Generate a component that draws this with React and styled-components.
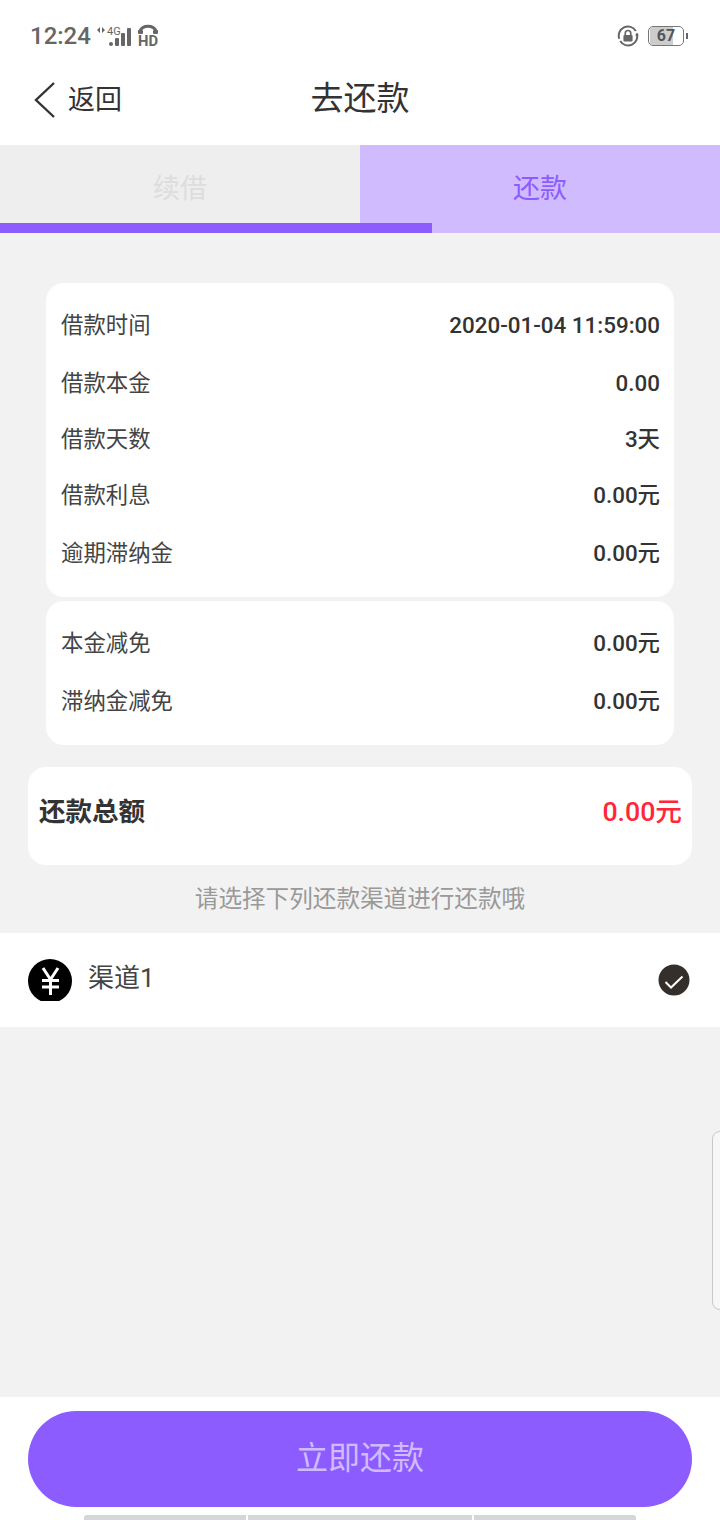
import React from 'react';
import styled, { createGlobalStyle } from 'styled-components';

const GlobalStyle = createGlobalStyle`
  html, body {
    margin: 0;
    padding: 0;
    background: #f2f2f2;
  }
  * {
    box-sizing: border-box;
  }
`;

const basicRows = [
  { label: '借款时间', value: '2020-01-04 11:59:00' },
  { label: '借款本金', value: '0.00' },
  { label: '借款天数', value: '3天', short: true },
  { label: '借款利息', value: '0.00元' },
  { label: '逾期滞纳金', value: '0.00元' },
];

const reliefRows = [
  { label: '本金减免', value: '0.00元' },
  { label: '滞纳金减免', value: '0.00元' },
];

function SignalIcon() {
  return (
    <svg width="36" height="24" viewBox="0 0 36 24">
      <path d="M1 6 L4 3 V9 Z M6 3 L9 6 L6 9 Z" fill="#666" />
      <text x="11" y="11" fontSize="11" fontFamily="Roboto, sans-serif" fill="#666">4G</text>
      <circle cx="15" cy="20" r="2" fill="#666" />
      <rect x="19" y="14" width="4" height="8" rx="1" fill="#666" />
      <rect x="25" y="9" width="4" height="13" rx="1" fill="#666" />
      <rect x="31" y="4" width="4" height="18" rx="1" fill="#666" />
    </svg>
  );
}

function CallIcon() {
  return (
    <svg width="22" height="26" viewBox="0 0 22 26">
      <path d="M3 8 C5.5 1.5 16.5 1.5 19 8" fill="none" stroke="#666" strokeWidth="3" />
      <rect x="1" y="7" width="5" height="4" rx="1" fill="#666" />
      <rect x="16" y="7" width="5" height="4" rx="1" fill="#666" />
      <text
        x="1"
        y="23"
        fontSize="15"
        fontWeight="700"
        fontFamily="Roboto, sans-serif"
        fill="#666"
        textLength="20"
        lengthAdjust="spacingAndGlyphs"
      >
        HD
      </text>
    </svg>
  );
}

function LockRotateIcon() {
  return (
    <svg width="22" height="22" viewBox="0 0 24 24">
      <path d="M20.5 6.5 A10 10 0 0 0 2.5 15" fill="none" stroke="#666" strokeWidth="2.2" />
      <path d="M3.5 17.5 A10 10 0 0 0 21.5 9" fill="none" stroke="#666" strokeWidth="2.2" />
      <path d="M22.5 13 L19.5 11 L23.5 10 Z" fill="#666" />
      <rect x="7" y="11" width="10" height="7" rx="1" fill="#666" />
      <path d="M9 11 V9 A3 3 0 0 1 15 9 V11" fill="none" stroke="#666" strokeWidth="1.8" />
    </svg>
  );
}

function YenIcon() {
  return (
    <svg width="44" height="42" viewBox="0 0 44 42">
      <circle cx="22" cy="22" r="22" fill="#000" />
      <path
        d="M15 9 L22.5 20.5 L30 9 M14 21.5 H31 M14 28 H31 M22.5 20 V36"
        fill="none"
        stroke="#fff"
        strokeWidth="3"
      />
    </svg>
  );
}

function CheckIcon() {
  return (
    <svg width="32" height="32" viewBox="0 0 32 32">
      <circle cx="16" cy="16" r="15.5" fill="#352f2b" />
      <path d="M7.5 18 L13 23.5 L24.5 12.5" fill="none" stroke="#fff" strokeWidth="2" />
    </svg>
  );
}

function BackIcon() {
  return (
    <svg width="22" height="38" viewBox="0 0 22 38">
      <path d="M20 2 L2 19 L20 36" fill="none" stroke="#333" strokeWidth="2.4" />
    </svg>
  );
}

function App() {
  return (
    <Page>
      <GlobalStyle />
      <TopArea>
        <StatusBar>
          <LeftStatus>
            <Time>12:24</Time>
            <SignalIcon />
            <CallIcon />
          </LeftStatus>
          <RightStatus>
            <LockRotateIcon />
            <Battery>
              <BatteryFill />
              <BatteryText>67</BatteryText>
            </Battery>
            <BatteryTip />
          </RightStatus>
        </StatusBar>
        <Header>
          <BackButton>
            <BackIcon />
            <BackText>返回</BackText>
          </BackButton>
          <Title>去还款</Title>
        </Header>
      </TopArea>

      <Tabs>
        <Tab>续借</Tab>
        <Tab $active>还款</Tab>
        <TabIndicator />
      </Tabs>

      <Content>
        <Card>
          {basicRows.map(row => (
            <Row key={row.label} $short={row.short}>
              <RowLabel>{row.label}</RowLabel>
              <RowValue>{row.value}</RowValue>
            </Row>
          ))}
        </Card>
        <ReliefCard>
          {reliefRows.map(row => (
            <Row key={row.label}>
              <RowLabel>{row.label}</RowLabel>
              <RowValue>{row.value}</RowValue>
            </Row>
          ))}
        </ReliefCard>
        <TotalCard>
          <TotalLabel>还款总额</TotalLabel>
          <TotalValue>0.00元</TotalValue>
        </TotalCard>
        <Hint>请选择下列还款渠道进行还款哦</Hint>
      </Content>

      <Channel>
        <ChannelLeft>
          <YenIcon />
          <ChannelName>渠道1</ChannelName>
        </ChannelLeft>
        <CheckIcon />
      </Channel>

      <Spacer />

      <Footer>
        <PayButton>立即还款</PayButton>
        <HomeBars>
          <HomeBar $width={162} />
          <HomeBar $width={224} />
          <HomeBar $width={162} />
        </HomeBars>
      </Footer>

      <SideHandle />
    </Page>
  );
}

const fontStack = `Roboto, "Noto Sans CJK SC", sans-serif`;

const Page = styled.div`
  position: relative;
  display: flex;
  flex-direction: column;
  width: 720px;
  height: 1520px;
  overflow: hidden;
  background: #f2f2f2;
  font-family: ${fontStack};
  color: #333;
`;

const TopArea = styled.div`
  height: 145px;
  background: #fff;
`;

const StatusBar = styled.div`
  display: flex;
  justify-content: space-between;
  align-items: center;
  height: 72px;
  padding: 0 32px 0 30px;
`;

const LeftStatus = styled.div`
  display: flex;
  align-items: center;
  gap: 5px;
`;

const RightStatus = styled.div`
  display: flex;
  align-items: center;
  gap: 2px;
`;

const Time = styled.span`
  width: 61px;
  font-size: 24px;
  font-weight: 500;
  color: #666;
`;

const Battery = styled.div`
  position: relative;
  width: 36px;
  height: 20px;
  margin-left: 7px;
  border: 1.5px solid #777;
  border-radius: 5px;
  overflow: hidden;
`;

const BatteryFill = styled.div`
  width: 67%;
  height: 100%;
  margin-left: 1px;
  background: #ccc;
`;

const BatteryText = styled.span`
  position: absolute;
  top: 0;
  left: 0;
  width: 100%;
  font-size: 16px;
  font-weight: 700;
  line-height: 17px;
  text-align: center;
  color: #555;
`;

const BatteryTip = styled.div`
  width: 2px;
  height: 6px;
  background: #666;
`;

const Header = styled.div`
  position: relative;
  display: flex;
  justify-content: center;
  align-items: center;
  height: 54px;
`;

const BackButton = styled.div`
  position: absolute;
  left: 34px;
  top: 9px;
  display: flex;
  align-items: center;
  gap: 12px;
`;

const BackText = styled.span`
  font-size: 27px;
  line-height: 38px;
  color: #333;
`;

const Title = styled.h1`
  margin: 0;
  font-size: 33px;
  font-weight: 400;
  line-height: 54px;
  color: #333;
`;

const Tabs = styled.div`
  position: relative;
  display: flex;
  height: 88px;
`;

const Tab = styled.div`
  flex: 1;
  padding-bottom: 6px;
  display: flex;
  justify-content: center;
  align-items: center;
  font-size: 27px;
  background: ${props => (props.$active ? '#d0bbff' : '#eeeeee')};
  color: ${props => (props.$active ? '#8c5cff' : '#dddddd')};
`;

const TabIndicator = styled.div`
  position: absolute;
  left: 0;
  bottom: 0;
  width: 432px;
  height: 10px;
  background: #8c5cff;
`;

const Content = styled.div`
  display: flex;
  flex-direction: column;
  align-items: center;
  padding-top: 50px;
`;

const Card = styled.div`
  width: 628px;
  padding: 13px 14px 15px 15px;
  background: #fff;
  border-radius: 18px;
`;

const ReliefCard = styled(Card)`
  margin-top: 4px;
`;

const Row = styled.div`
  display: flex;
  justify-content: space-between;
  align-items: center;
  height: ${props => (props.$short ? '54px' : '58px')};
  line-height: 30px;
`;

const RowLabel = styled.span`
  font-size: 22.4px;
  color: #444;
`;

const RowValue = styled.span`
  font-size: 22.4px;
  font-weight: 500;
  color: #333;
`;

const TotalCard = styled.div`
  display: flex;
  justify-content: space-between;
  align-items: center;
  width: 664px;
  height: 98px;
  margin-top: 22px;
  padding: 0 10px 14px 11px;
  background: #fff;
  border-radius: 18px;
`;

const TotalLabel = styled.span`
  font-size: 26.5px;
  font-weight: 700;
  color: #333;
`;

const TotalValue = styled.span`
  font-size: 26.7px;
  font-weight: 500;
  color: #ff2637;
`;

const Hint = styled.div`
  height: 68px;
  padding-top: 17px;
  font-size: 23.6px;
  line-height: 34px;
  color: #999;
`;

const Channel = styled.div`
  display: flex;
  justify-content: space-between;
  align-items: center;
  height: 94px;
  padding: 0 30px 0 28px;
  background: #fff;
`;

const ChannelLeft = styled.div`
  display: flex;
  align-items: center;
  gap: 16px;
`;

const ChannelName = styled.span`
  margin-top: -10px;
  font-size: 26px;
  color: #444;
`;

const Spacer = styled.div`
  flex: 1;
`;

const Footer = styled.div`
  display: flex;
  flex-direction: column;
  align-items: center;
  height: 123px;
  padding-top: 14px;
  background: #fff;
`;

const PayButton = styled.button`
  width: 664px;
  height: 96px;
  padding: 0 0 8px;
  border: none;
  border-radius: 48px;
  background: #8c5cff;
  font-family: ${fontStack};
  font-size: 32px;
  color: #d0bbff;
`;

const HomeBars = styled.div`
  display: flex;
  gap: 2px;
  margin-top: 8px;
`;

const HomeBar = styled.div`
  width: ${props => props.$width}px;
  height: 5px;
  background: #d6d6d6;
  &:first-child {
    border-top-left-radius: 3px;
  }
  &:last-child {
    border-top-right-radius: 3px;
  }
`;

const SideHandle = styled.div`
  position: absolute;
  top: 1131px;
  left: 712px;
  width: 20px;
  height: 179px;
  background: #f7f7f7;
  border: 1px solid #c9c9c9;
  border-radius: 8px;
`;

export default App;
